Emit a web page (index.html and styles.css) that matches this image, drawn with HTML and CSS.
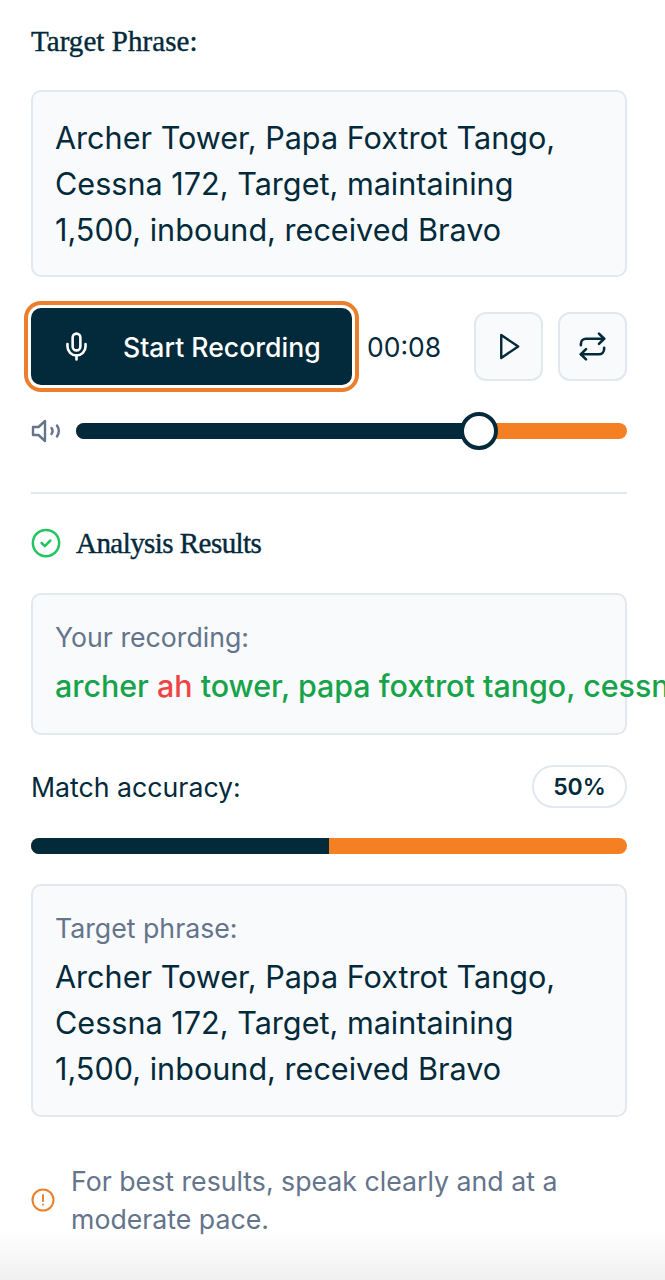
FILE: index.html
```html
<!DOCTYPE html>
<html lang="en">
<head>
    <meta charset="UTF-8">
    <meta name="viewport" content="width=device-width, initial-scale=1.0">
    <title>Phrase Practice</title>
    <link rel="stylesheet" href="styles.css">
</head>
<body>
    <main class="practice">
        <h2 class="heading">Target Phrase:</h2>
        <div class="phrase-box target-box">
            Archer Tower, Papa Foxtrot Tango,<br>
            Cessna 172, Target, maintaining<br>
            1,500, inbound, received Bravo
        </div>

        <div class="controls">
            <button class="record-btn" type="button">
                <svg class="mic-icon" viewBox="0 0 24 24" fill="none" stroke="currentColor" stroke-width="2" stroke-linecap="round" stroke-linejoin="round">
                    <path d="M12 2a3 3 0 0 0-3 3v7a3 3 0 0 0 6 0V5a3 3 0 0 0-3-3Z"/>
                    <path d="M19 10v2a7 7 0 0 1-14 0v-2"/>
                    <path d="M12 19v3"/>
                </svg>
                <span>Start Recording</span>
            </button>
            <span class="timer">00:08</span>
            <button class="icon-btn" type="button" aria-label="Play">
                <svg viewBox="0 0 24 24" fill="none" stroke="currentColor" stroke-width="2" stroke-linecap="round" stroke-linejoin="round">
                    <polygon points="6 2.5 20 12 6 21.5 6 2.5"/>
                </svg>
            </button>
            <button class="icon-btn repeat-btn" type="button" aria-label="Repeat">
                <svg viewBox="0 0 24 24" fill="none" stroke="currentColor" stroke-width="2" stroke-linecap="round" stroke-linejoin="round">
                    <path d="m17 2 4 4-4 4"/>
                    <path d="M3 11v-1a4 4 0 0 1 4-4h14"/>
                    <path d="m7 22-4-4 4-4"/>
                    <path d="M21 13v1a4 4 0 0 1-4 4H3"/>
                </svg>
            </button>
        </div>

        <div class="volume">
            <svg class="volume-icon" viewBox="0 0 30 24" fill="none" stroke="currentColor" stroke-width="2.4" stroke-linecap="round" stroke-linejoin="round">
                <path d="M14 2 7.5 8H2v8h5.5l6.5 6Z"/>
                <path d="M20.5 9a5 5 0 0 1 0 6"/>
                <path d="M26 6.5a10 10 0 0 1 0 11"/>
            </svg>
            <div class="volume-track">
                <div class="volume-fill"></div>
                <div class="volume-thumb"></div>
            </div>
        </div>

        <hr class="divider">

        <div class="results-title">
            <svg class="check-icon" viewBox="0 0 24 24" fill="none" stroke="currentColor" stroke-width="2" stroke-linecap="round" stroke-linejoin="round">
                <circle cx="12" cy="12" r="10.5"/>
                <path d="m8.5 12 2.5 2.5 4.5-4.5"/>
            </svg>
            <h3 class="heading">Analysis Results</h3>
        </div>

        <div class="phrase-box recording-box">
            <div class="box-label">Your recording:</div>
            <div class="transcript"><span class="ok">archer</span> <span class="bad">ah</span> <span class="ok">tower, papa foxtrot tango, cessna 172, target, maintaining</span></div>
        </div>

        <div class="accuracy-row">
            <span>Match accuracy:</span>
            <span class="badge">50%</span>
        </div>
        <div class="accuracy-bar"><div class="accuracy-fill"></div></div>

        <div class="phrase-box compare-box">
            <div class="box-label">Target phrase:</div>
            <div class="compare-text">
                Archer Tower, Papa Foxtrot Tango,<br>
                Cessna 172, Target, maintaining<br>
                1,500, inbound, received Bravo
            </div>
        </div>

        <div class="tip">
            <svg class="tip-icon" viewBox="0 0 24 24" fill="none" stroke="currentColor" stroke-width="2" stroke-linecap="round" stroke-linejoin="round">
                <circle cx="12" cy="12" r="10.5"/>
                <path d="M12 7v6"/>
                <path d="M12 16.5h.01"/>
            </svg>
            <p>For best results, speak clearly and at a moderate pace.</p>
        </div>
    </main>
    <div class="bottom-fade"></div>
</body>
</html>
```

FILE: styles.css
```css
* {
    box-sizing: border-box;
}

html, body {
    margin: 0;
    padding: 0;
    height: 1280px;
    overflow: hidden;
}

body {
    position: relative;
    background-color: #fff;
    color: #032a3a;
    font-family: Inter, "Noto Sans", sans-serif;
}

.practice {
    padding: 23px 38px 0 31px;
}

.heading {
    margin: 0;
    font-family: "Liberation Serif", serif;
    font-weight: 400;
    font-size: 29px;
    line-height: 36px;
    letter-spacing: 0.06px;
    -webkit-text-stroke: 0.4px #032a3a;
}

.phrase-box {
    background-color: #f8fafc;
    border: 2px solid #e2e8f0;
    border-radius: 10px;
    padding: 0 22px;
    font-size: 30.6px;
    line-height: 46px;
}

.target-box {
    margin-top: 31px;
    height: 187px;
    padding-top: 23px;
}

.controls {
    display: flex;
    align-items: center;
    margin-top: 31px;
}

.record-btn {
    display: flex;
    align-items: center;
    width: 321px;
    height: 77px;
    padding: 0 0 0 30px;
    background-color: #032a3a;
    color: #fff;
    border: none;
    border-radius: 10px;
    box-shadow: 0 0 0 3px #fff, 0 0 0 7px #ec7f2b;
    font-family: inherit;
    font-size: 26.6px;
    font-weight: 500;
}

.mic-icon {
    width: 31px;
    height: 31px;
    margin-right: 31px;
}

.timer {
    margin-left: 15px;
    width: 107px;
    font-size: 26.5px;
}

.icon-btn {
    display: flex;
    align-items: center;
    justify-content: center;
    width: 69px;
    height: 69px;
    margin-right: 15px;
    padding: 0;
    background-color: #f8fafc;
    color: #032a3a;
    border: 2px solid #e2e8f0;
    border-radius: 12px;
}

.icon-btn svg {
    width: 29px;
    height: 29px;
}

.repeat-btn {
    margin-right: 0;
}

.repeat-btn svg {
    width: 31px;
    height: 31px;
}

.volume {
    display: flex;
    align-items: center;
    margin-top: 34px;
}

.volume-icon {
    width: 30px;
    height: 24px;
    margin-right: 15px;
    color: #64748b;
}

.volume-track {
    position: relative;
    flex: 1;
    height: 16px;
    background-color: #f58023;
    border-radius: 8px;
}

.volume-fill {
    width: 404px;
    height: 100%;
    background-color: #032a3a;
    border-radius: 8px 0 0 8px;
}

.volume-thumb {
    position: absolute;
    left: 384px;
    top: -11px;
    width: 38px;
    height: 38px;
    background-color: #fff;
    border: 4px solid #032a3a;
    border-radius: 50%;
}

.divider {
    margin: 49px 0 0;
    height: 2px;
    border: none;
    background-color: #e2e8f0;
}

.results-title {
    display: flex;
    align-items: center;
    margin-top: 31px;
    height: 36px;
}

.results-title .heading {
    letter-spacing: -0.55px;
}

.check-icon {
    width: 30px;
    height: 30px;
    margin-right: 15px;
    color: #22c55e;
}

.recording-box {
    margin-top: 32px;
    height: 142px;
    padding-top: 19px;
    white-space: nowrap;
}

.box-label {
    color: #64748b;
    font-size: 26.7px;
    line-height: 46px;
}

.transcript {
    margin-top: 3px;
    font-size: 30.4px;
    font-weight: 500;
}

.ok {
    color: #16a34a;
}

.bad {
    color: #ef4444;
}

.accuracy-row {
    display: flex;
    align-items: center;
    justify-content: space-between;
    margin-top: 30px;
    height: 43px;
    font-size: 26.7px;
}

.badge {
    display: flex;
    align-items: center;
    justify-content: center;
    width: 95px;
    height: 43px;
    background-color: #fff;
    border: 2px solid #e2e8f0;
    border-radius: 22px;
    font-size: 23px;
    font-weight: 600;
}

.accuracy-bar {
    margin-top: 30px;
    height: 16px;
    background-color: #f58023;
    border-radius: 8px;
    overflow: hidden;
}

.accuracy-fill {
    width: 50%;
    height: 100%;
    background-color: #032a3a;
}

.compare-box {
    margin-top: 30px;
    height: 233px;
    padding-top: 19px;
}

.compare-text {
    margin-top: 3px;
}

.tip {
    display: flex;
    align-items: center;
    margin-top: 45px;
    color: #64748b;
}

.tip-icon {
    flex: none;
    width: 24px;
    height: 24px;
    margin-right: 16px;
    color: #ec7f2b;
}

.tip p {
    margin: 0;
    font-size: 26.7px;
    line-height: 38px;
    width: 510px;
}

.bottom-fade {
    position: absolute;
    left: 0;
    right: 0;
    bottom: 0;
    height: 50px;
    background: linear-gradient(to bottom, rgba(240, 240, 240, 0), #f0f0f0);
}
```
